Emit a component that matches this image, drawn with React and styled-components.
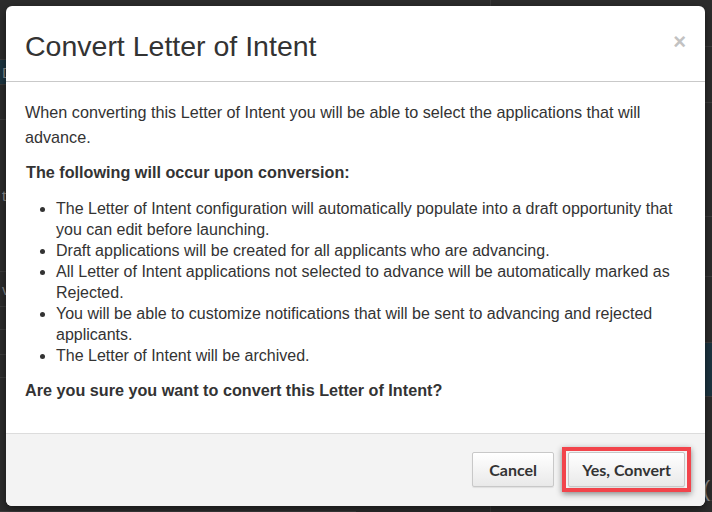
import styled, { createGlobalStyle } from "styled-components";

const GlobalStyle = createGlobalStyle`
  html, body {
    margin: 0;
    padding: 0;
    background: #2c2c2c;
  }
  * {
    box-sizing: border-box;
  }
`;

// what shows of the page behind the backdrop
const leftRows = [
  { h: 60 },
  { h: 25, tone: "teal", label: "D" },
  { h: 35 },
  { h: 152, label: "to" },
  { h: 35, label: "ve" },
  { h: 23 },
  { h: 25 },
  { h: 23 },
  { h: 134 },
];

const rightRows = [
  { h: 47 },
  { h: 56 },
  { h: 114 },
  { h: 60 },
  { h: 66 },
  { h: 54, tone: "teal" },
  { h: 104, label: "Edit (", low: true },
];

const bullets = [
  "The Letter of Intent configuration will automatically populate into a draft opportunity that you can edit before launching.",
  "Draft applications will be created for all applicants who are advancing.",
  "All Letter of Intent applications not selected to advance will be automatically marked as Rejected.",
  "You will be able to customize notifications that will be sent to advancing and rejected applicants.",
  "The Letter of Intent will be archived.",
];

export default function App() {
  return (
    <>
      <GlobalStyle />
      <Screen>
        <Page>
          <Column>
            {leftRows.map((row, i) => (
              <Row key={i} $tone={row.tone} style={{ height: row.h }}>
                {row.label}
              </Row>
            ))}
          </Column>
          <Column>
            {rightRows.map((row, i) => (
              <Row
                key={i}
                $tone={row.tone}
                $align="end"
                $low={row.low}
                style={{ height: row.h }}
              >
                {row.label}
              </Row>
            ))}
          </Column>
        </Page>
        <Backdrop>
          <Modal>
            <Header>
              <Title>Convert Letter of Intent</Title>
              <Close type="button" aria-label="Close">
                ×
              </Close>
            </Header>
            <Body>
              <Lead>
                When converting this Letter of Intent you will be able to select
                the applications that will advance.
              </Lead>
              <Heading>The following will occur upon conversion:</Heading>
              <List>
                {bullets.map((text) => (
                  <li key={text}>{text}</li>
                ))}
              </List>
              <Question>Are you sure you want to convert this Letter of Intent?</Question>
            </Body>
            <Footer>
              <Button type="button">Cancel</Button>
              <Highlight>
                <Button type="button">Yes, Convert</Button>
              </Highlight>
            </Footer>
          </Modal>
        </Backdrop>
      </Screen>
    </>
  );
}

const Screen = styled.div`
  position: relative;
  width: 712px;
  height: 512px;
  overflow: hidden;
  background: #2c2c2c;
  font-family: "Liberation Sans", Arial, sans-serif;
`;

const Page = styled.div`
  display: grid;
  grid-template-columns: 1fr 1fr;
  height: 100%;
`;

const Column = styled.div`
  display: flex;
  flex-direction: column;
  border-left: 1px solid #343434;
  &:first-child {
    border-left: 0;
  }
  &:last-child {
    border-left: 1px solid #3a3a3a;
    margin-left: 134px;
  }
`;

const Row = styled.div`
  display: flex;
  align-items: ${(p) => (p.$low ? "flex-end" : "center")};
  justify-content: ${(p) => (p.$align === "end" ? "flex-end" : "flex-start")};
  padding: 0 2px;
  flex-shrink: 0;
  border-bottom: 1px solid #3c3c3c;
  background: ${(p) => (p.$tone === "teal" ? "#1c3440" : "transparent")};
  color: #8d8d8d;
  font-size: ${(p) => (p.$low ? "22px" : "15px")};
  line-height: 1;
  margin-bottom: ${(p) => (p.$low ? "-6px" : "0")};
`;

const Backdrop = styled.div`
  position: absolute;
  inset: 0;
  padding: 6px 7px 6px 6px;
`;

const Modal = styled.div`
  display: flex;
  flex-direction: column;
  width: 699px;
  height: 500px;
  background: #fff;
  border-radius: 6px;
  box-shadow: 0 3px 9px rgba(0, 0, 0, 0.5);
  overflow: hidden;
  color: #333;
`;

const Header = styled.div`
  display: flex;
  justify-content: space-between;
  align-items: flex-start;
  padding: 22px 19px 16px 19px;
  border-bottom: 1px solid #c9c9c9;
`;

const Title = styled.h4`
  margin: 0;
  font-size: 28.5px;
  line-height: 37px;
  font-weight: 400;
  color: #333;
`;

const Close = styled.button`
  margin-top: 3px;
  padding: 0;
  border: 0;
  background: transparent;
  font-family: "Liberation Sans", Arial, sans-serif;
  font-size: 22px;
  font-weight: 700;
  line-height: 21px;
  color: #c2c2c2;
  cursor: pointer;
`;

const Body = styled.div`
  flex: 1;
  padding: 18px 12px 0 19px;
  font-size: 16.2px;
`;

const Lead = styled.p`
  margin: 0;
  line-height: 25px;
`;

const Heading = styled.p`
  margin: 12px 0 0 1px;
  font-weight: 700;
  line-height: 21px;
`;

const List = styled.ul`
  margin: 15px 0 0 0;
  padding-left: 31px;
  font-size: 16px;
  line-height: 21px;
`;

const Question = styled.p`
  margin: 14px 0 0 0;
  font-weight: 700;
  line-height: 21px;
`;

const Footer = styled.div`
  display: flex;
  justify-content: flex-end;
  align-items: center;
  gap: 8px;
  height: 73px;
  padding: 0 14px 1px 0;
  background: #f3f3f3;
  border-top: 1px solid #dcdcdc;
`;

const Highlight = styled.span`
  display: inline-flex;
  padding: 1px 2px;
  border: 4px solid #f2444b;
  box-shadow: 0 2px 6px rgba(0, 0, 0, 0.45);
`;

const Button = styled.button`
  min-width: 82px;
  height: 35px;
  padding: 0 13px;
  border: 1px solid #c8c8c8;
  border-radius: 2px;
  background: linear-gradient(#ffffff, #e9e9e9);
  box-shadow: 0 1px 1px rgba(0, 0, 0, 0.08);
  font-family: Lato, "Open Sans", sans-serif;
  font-size: 16px;
  font-weight: 700;
  color: #333;
  cursor: pointer;
`;
